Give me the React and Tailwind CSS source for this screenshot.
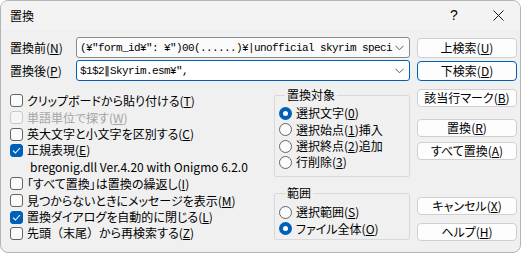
import React from "react";

const font = "font-['Noto_Sans_CJK_JP',sans-serif] [font-feature-settings:'palt']";

function K({ pre, k, post = "" }) {
    return (
        <>
            {pre}(<span className="underline underline-offset-[1px]">{k}</span>){post}
        </>
    );
}

function Check({ checked, disabled, h, children }) {
    const box = checked
        ? "bg-[#005fb8] border-[#005fb8]"
        : disabled
        ? "bg-[#f5f5f5] border-[#c9c9c9]"
        : "bg-[#fbfbfb] border-[#646464]";
    return (
        <div className={`flex items-center gap-[4px] ${h}`}>
            <span className={`w-[13px] h-[13px] shrink-0 rounded-[3px] border flex items-center justify-center ${box}`}>
                {checked && (
                    <svg width="9" height="7" viewBox="0 0 9 7">
                        <path d="M1 3.6 L3.4 6 L8 1" fill="none" stroke="white" strokeWidth="1.1" />
                    </svg>
                )}
            </span>
            <span className={`leading-[16px] whitespace-nowrap ${disabled ? "text-[#a3a3a3]" : ""}`}>{children}</span>
        </div>
    );
}

function Radio({ on, h, children }) {
    return (
        <div className={`flex items-center gap-[4px] ${h}`}>
            {on ? (
                <span className="w-[13px] h-[13px] shrink-0 rounded-full bg-[#005fb8] flex items-center justify-center">
                    <span className="w-[5px] h-[5px] rounded-full bg-white" />
                </span>
            ) : (
                <span className="w-[13px] h-[13px] shrink-0 rounded-full border border-[#646464] bg-[#fbfbfb]" />
            )}
            <span className="leading-[16px] whitespace-nowrap">{children}</span>
        </div>
    );
}

function Btn({ h, mt, def, children }) {
    return (
        <div
            className={`w-[100px] ${h} ${mt} rounded-[4px] border ${
                def ? "border-[#005fb8]" : "border-[#d0d0d0]"
            } bg-[#fdfdfd] flex items-center justify-center leading-[16px]`}
        >
            {children}
        </div>
    );
}

function Chevron() {
    return (
        <svg width="9" height="6" viewBox="0 0 9 6" className="shrink-0">
            <path d="M0.5 0.8 L4.5 4.8 L8.5 0.8" fill="none" stroke="#5a5a5a" strokeWidth="1" />
        </svg>
    );
}

const mono = "flex-1 overflow-hidden whitespace-nowrap font-['Liberation_Mono',monospace] text-[11px] tracking-[-0.6px] leading-[14px] [font-feature-settings:normal]";

export default function App() {
    return (
        <div className={`w-[524px] h-[256px] bg-white text-[12px] text-black ${font}`}>
            <div className="w-[521px] h-[253px] border border-[#b4b4b4] rounded-[8px] overflow-hidden bg-[#f0f0f0] flex flex-col">
                {/* title bar */}
                <div className="h-[29px] shrink-0 bg-[#f3f3f3] flex items-center">
                    <span className="pl-[9px] leading-[16px]">置換</span>
                    <div className="ml-auto flex h-full">
                        <div className="w-[44px] flex items-center justify-center text-[14px] font-['Liberation_Sans',sans-serif]">?</div>
                        <div className="w-[44px] flex items-center justify-center">
                            <svg width="11" height="11" viewBox="0 0 11 11">
                                <path d="M0.5 0.5 L10.5 10.5 M10.5 0.5 L0.5 10.5" stroke="#1a1a1a" strokeWidth="1" />
                            </svg>
                        </div>
                    </div>
                </div>

                {/* body */}
                <div className="pl-[9px] pt-[7px] flex flex-col">
                    <div className="flex items-center h-[21px]">
                        <span className="w-[66px] leading-[16px]"><K pre="置換前" k="N" /></span>
                        <div className="w-[334px] h-[21px] rounded-[3px] border border-[#8a8a8a] bg-[#fbfbfb] flex items-center pl-[3px] pr-[5px]">
                            <span className={mono}>(¥"form_id¥": ¥")00(......)¥|unofficial skyrim speci</span>
                            <Chevron />
                        </div>
                        <div className="ml-[7px]">
                            <Btn h="h-[20px]" mt=""><K pre="上検索" k="U" /></Btn>
                        </div>
                    </div>
                    <div className="flex items-center h-[21px] mt-[2px]">
                        <span className="w-[66px] leading-[16px]"><K pre="置換後" k="P" /></span>
                        <div className="w-[334px] h-[21px] rounded-[3px] border border-[#005fb8] bg-white flex items-center pl-[3px] pr-[5px]">
                            <span className={mono}>
                                $1$2<span className="inline-block w-[6px] text-center font-['DejaVu_Sans',sans-serif] tracking-normal">‖</span>Skyrim.esm¥",
                            </span>
                            <Chevron />
                        </div>
                        <div className="ml-[7px]">
                            <Btn h="h-[20px]" mt="" def><K pre="下検索" k="D" /></Btn>
                        </div>
                    </div>

                    <div className="flex mt-[6px]">
                        {/* options */}
                        <div className="w-[264px] pt-[5px] flex flex-col">
                            <Check h="h-[17px]"><K pre="クリップボードから貼り付ける" k="T" /></Check>
                            <Check h="h-[17px]" disabled><K pre="単語単位で探す" k="W" /></Check>
                            <Check h="h-[16px]"><K pre="英大文字と小文字を区別する" k="C" /></Check>
                            <Check h="h-[16px]" checked><K pre="正規表現" k="E" /></Check>
                            <div className="h-[17px] pl-[20px] leading-[16px] flex items-center whitespace-nowrap">
                                bregonig.dll Ver.4.20 with Onigmo 6.2.0
                            </div>
                            <Check h="h-[17px]"><K pre="「すべて置換」は置換の繰返し" k="I" /></Check>
                            <Check h="h-[17px]"><K pre="見つからないときにメッセージを表示" k="M" /></Check>
                            <Check h="h-[16px]" checked><K pre="置換ダイアログを自動的に閉じる" k="L" /></Check>
                            <Check h="h-[16px]">
                                <K pre={<>先頭<span className="[font-feature-settings:normal]">（</span>末尾<span className="[font-feature-settings:normal]">）</span>から再検索する</>} k="Z" />
                            </Check>
                        </div>

                        {/* groups */}
                        <div className="w-[136px] flex flex-col">
                            <fieldset className="border border-[#d9d9d9] rounded-[2px] pl-[4px] pt-[2px] pb-[6px]">
                                <legend className="ml-[6px] px-[2px] leading-[16px]">置換対象</legend>
                                <Radio h="h-[16px]" on><K pre="選択文字" k="0" /></Radio>
                                <Radio h="h-[17px]"><K pre="選択始点" k="1" post="挿入" /></Radio>
                                <Radio h="h-[16px]"><K pre="選択終点" k="2" post="追加" /></Radio>
                                <Radio h="h-[16px]"><K pre="行削除" k="3" /></Radio>
                            </fieldset>
                            <fieldset className="mt-[8px] border border-[#d9d9d9] rounded-[2px] pl-[4px] pt-[3px] pb-[2px]">
                                <legend className="ml-[6px] px-[2px] leading-[16px]">範囲</legend>
                                <Radio h="h-[16px]"><K pre="選択範囲" k="S" /></Radio>
                                <Radio h="h-[17px]" on><K pre="ファイル全体" k="O" /></Radio>
                            </fieldset>
                        </div>

                        {/* buttons */}
                        <div className="ml-[7px] flex flex-col">
                            <Btn h="h-[18px]" mt="mt-[2px]"><K pre="該当行マーク" k="B" /></Btn>
                            <Btn h="h-[18px]" mt="mt-[12px]"><K pre="置換" k="R" /></Btn>
                            <Btn h="h-[18px]" mt="mt-[5px]"><K pre="すべて置換" k="A" /></Btn>
                            <Btn h="h-[18px]" mt="mt-[37px]"><K pre="キャンセル" k="X" /></Btn>
                            <Btn h="h-[18px]" mt="mt-[8px]"><K pre="ヘルプ" k="H" /></Btn>
                        </div>
                    </div>
                </div>
            </div>
        </div>
    );
}
